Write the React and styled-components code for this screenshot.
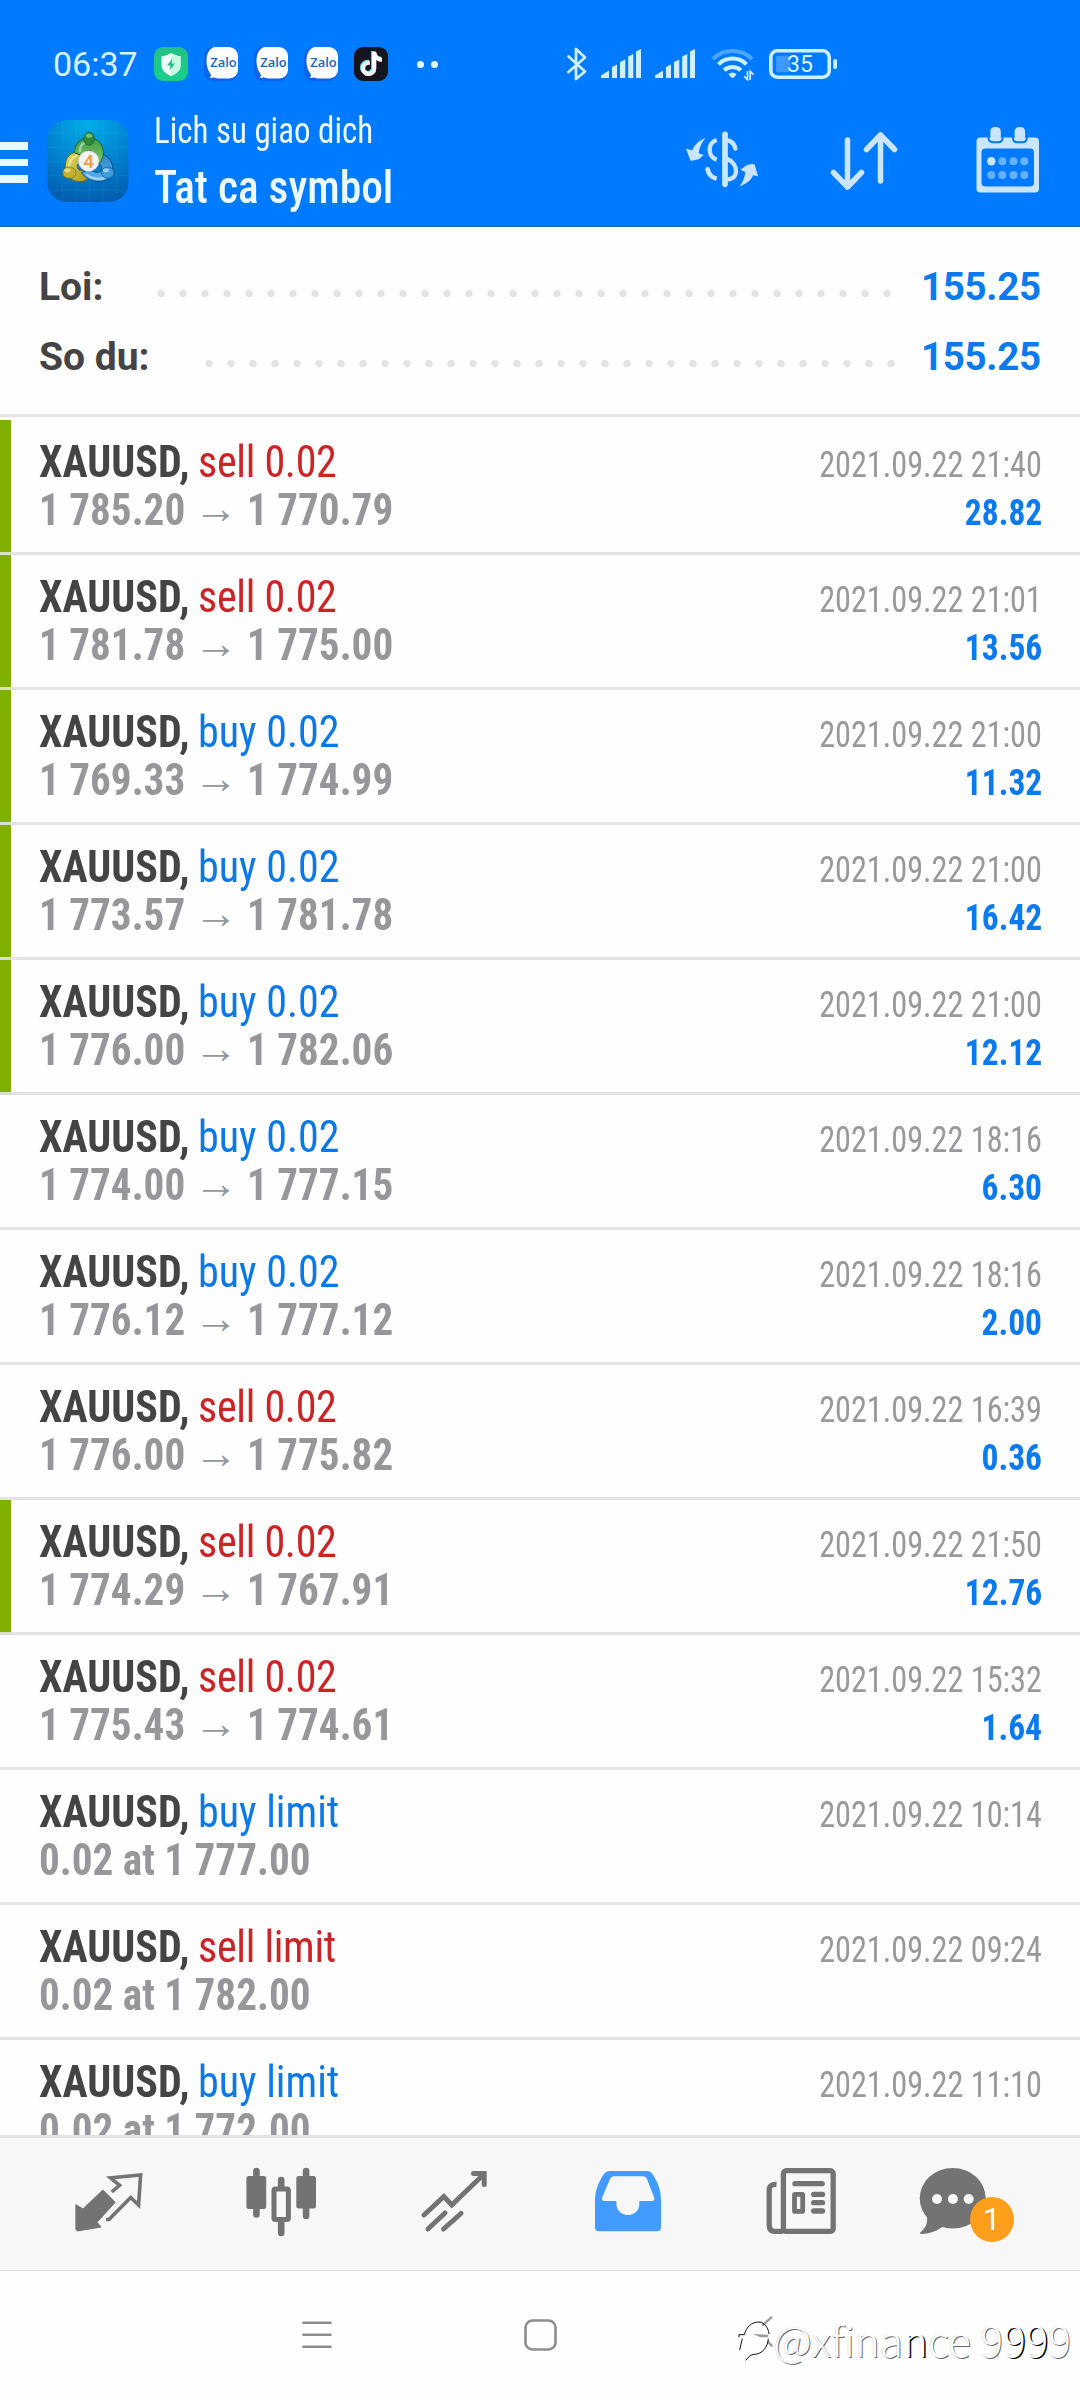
import React from 'react';
import styled, { createGlobalStyle } from 'styled-components';
import { FaTiktok } from 'react-icons/fa6';

const GlobalStyle = createGlobalStyle`
  * {
    box-sizing: border-box;
  }

  body {
    margin: 0;
    background: #fff;
    font-family: Roboto, sans-serif;
  }

  svg {
    display: block;
    flex-shrink: 0;
  }
`;

const Screen = styled.div`
  position: relative;
  display: flex;
  flex-direction: column;
  width: 1080px;
  height: 2400px;
  background: #fefefe;
  overflow: hidden;
`;

const Header = styled.header`
  height: 227px;
  background: #007aff;
  border-bottom: 2px solid #1c6cb8;
`;

const StatusBar = styled.div`
  display: flex;
  align-items: center;
  height: 100px;
  padding: 28px 0 0 53px;
`;

const Clock = styled.span`
  width: 101px;
  font-size: 34px;
  color: #d6f2ff;
`;

const AppIcons = styled.div`
  display: flex;
  align-items: center;
  gap: 16px;
  width: 412px;
`;

const AppTile = styled.span`
  display: flex;
  align-items: center;
  justify-content: center;
  width: 34px;
  height: 34px;
  border-radius: 9px;
  background: ${props => props.$bg};
`;

const MoreDots = styled.span`
  display: flex;
  gap: 7px;
  margin-left: 13px;

  &::before,
  &::after {
    content: '';
    width: 7px;
    height: 7px;
    border-radius: 50%;
    background: #e4f8ff;
  }
`;

const TikTokNote = styled.span`
  display: flex;
  color: #fff;

  svg {
    width: 21px;
    height: 24px;
    filter: drop-shadow(-0.8px -0.5px 0 #3ceae5) drop-shadow(0.8px 0.8px 0 #f5325b);
  }
`;

const SystemIcons = styled.div`
  display: flex;
  align-items: center;
  color: #cdf0ff;
`;

const SystemIcon = styled.span`
  margin-right: ${props => props.$gap}px;
`;

const Toolbar = styled.div`
  display: flex;
  align-items: center;
  height: 125px;
`;

const MenuButton = styled.div`
  display: flex;
  flex-direction: column;
  gap: 9px;
  width: 47px;
`;

const MenuLine = styled.span`
  width: 27.5px;
  height: 7.5px;
  background: #e9f7ff;
`;

const Logo = styled.div`
  margin-bottom: 3px;
`;

const Titles = styled.div`
  align-self: stretch;
  width: 532px;
  padding: 1px 0 0 24.5px;
  color: #edfaff;
`;

const Condensed = styled.span`
  display: inline-block;
  font-family: 'Roboto Condensed', Roboto, sans-serif;
  font-stretch: 75%;
  white-space: nowrap;
  transform: scaleX(${props => props.$scale});
  transform-origin: ${props => props.$origin || 'left'} center;
`;

const Subtitle = styled.div`
  font-size: 37px;
  line-height: 60px;
`;

const Title = styled.div`
  font-size: 47px;
  font-weight: 500;
  line-height: 52px;
`;

const Actions = styled.div`
  display: flex;
  align-items: flex-start;
  padding: 0 0 5px 25px;
`;

const Action = styled.div`
  margin: ${props => props.$top || 0}px ${props => props.$gap || 0}px 0 0;
`;

const Summary = styled.section`
  height: 190px;
  padding: 25px 40px 0 39px;
  border-bottom: 3px solid #e4e4e4;
`;

const SummaryRow = styled.div`
  display: flex;
  height: 70px;
  font-size: 39px;
  line-height: 70px;
  font-weight: 700;
  color: #444;
`;

const Leader = styled.span`
  width: ${props => props.$dots * 22}px;
  height: 70px;
  margin: 0 ${props => props.$gap}px 0 auto;
  background: radial-gradient(circle at 11px 41.5px, #e4e4e4 3.2px, transparent 4.2px) 0 0 / 22px 70px;
`;

const SummaryValue = styled.span`
  width: 119px;
  font-size: 38.5px;
  letter-spacing: -0.3px;
  text-align: right;
  color: #0b7aef;
`;

const List = styled.main`
  height: 1718px;
  padding-top: 3px;
  overflow: hidden;
`;

const Deal = styled.article`
  display: flex;
  justify-content: space-between;
  height: 135px;
  padding: 18px 38px 0 39px;
  border-bottom: 3px solid rgba(226, 226, 226, 0.92);
  background: ${props => (props.$marked ? 'linear-gradient(to right, #7fb000 11px, #fefefe 11px)' : 'none')};
`;

const DealInfo = styled.div`
  font-size: 44px;
  line-height: 48px;
`;

const Symbol = styled.div`
  height: 48px;
  font-weight: 700;
  color: #444;
`;

const Side = styled.span`
  margin-left: 9px;
  font-weight: 400;
  letter-spacing: ${props => (props.$sell ? '-0.3px' : 'normal')};
  color: ${props => (props.$sell ? '#cb2426' : '#0b78e8')};
`;

const Prices = styled.div`
  display: flex;
  height: 48px;
  font-weight: 700;
  color: #96979b;
`;

const Price = styled.span`
  width: ${props => (props.$from ? '155px' : 'auto')};
`;

const Arrow = styled.span`
  width: 53px;
  font-family: 'Liberation Sans', sans-serif;
  font-weight: 400;
  font-size: 44px;
  line-height: 44px;
`;

const DealMeta = styled.div`
  display: flex;
  flex-direction: column;
  align-items: flex-end;
  padding-top: 3px;
  font-size: 36px;
  line-height: 48px;
`;

const DealDate = styled.div`
  height: 48px;
  color: #98999d;
`;

const Profit = styled.div`
  font-weight: 700;
  color: #0b7aef;
`;

const TabBar = styled.nav`
  display: grid;
  grid-template-columns: repeat(6, 1fr);
  height: 136px;
  padding: 27px 18px 0 22px;
  border-top: 3px solid #e3e3e3;
  border-bottom: 1px solid #e0e0e0;
  background: #f7f7f7;
`;

const Tab = styled.div`
  position: relative;
  display: flex;
  align-items: flex-start;
  justify-content: center;
  padding-right: ${props => props.$shift || 0}px;
  color: ${props => (props.$active ? '#429bff' : '#737373')};
`;

const Badge = styled.span`
  position: absolute;
  top: 32px;
  left: 81px;
  width: 44px;
  height: 45px;
  border-radius: 50%;
  background: #ff9e1b;
  color: #fff;
  font-size: 32px;
  line-height: 45px;
  text-align: center;
`;

const SystemNav = styled.footer`
  display: flex;
  align-items: flex-start;
  gap: 192px;
  height: 129px;
  padding: 48px 0 0 302px;
  color: #8d8d8d;
`;

const Watermark = styled.div`
  position: absolute;
  right: 9px;
  bottom: 31px;
  display: flex;
  align-items: center;
  font-family: 'Noto Sans CJK SC', 'Noto Sans', sans-serif;
  font-weight: 300;
  font-size: 42px;
  line-height: 60px;
  letter-spacing: 0.15px;
  white-space: nowrap;
  color: #fff;
  text-shadow: 1px 1px 0 rgba(0, 0, 0, 0.6), -0.5px -0.5px 0.5px rgba(0, 0, 0, 0.2);
`;

const Heavy = styled.span`
  text-shadow: 1.5px 1px 0 #000;
`;

const deals = [
  { sell: true, type: 'sell 0.02', from: '1 785.20', to: '1 770.79', date: '2021.09.22 21:40', profit: '28.82', marked: true },
  { sell: true, type: 'sell 0.02', from: '1 781.78', to: '1 775.00', date: '2021.09.22 21:01', profit: '13.56', marked: true },
  { type: 'buy 0.02', from: '1 769.33', to: '1 774.99', date: '2021.09.22 21:00', profit: '11.32', marked: true },
  { type: 'buy 0.02', from: '1 773.57', to: '1 781.78', date: '2021.09.22 21:00', profit: '16.42', marked: true },
  { type: 'buy 0.02', from: '1 776.00', to: '1 782.06', date: '2021.09.22 21:00', profit: '12.12', marked: true },
  { type: 'buy 0.02', from: '1 774.00', to: '1 777.15', date: '2021.09.22 18:16', profit: '6.30' },
  { type: 'buy 0.02', from: '1 776.12', to: '1 777.12', date: '2021.09.22 18:16', profit: '2.00' },
  { sell: true, type: 'sell 0.02', from: '1 776.00', to: '1 775.82', date: '2021.09.22 16:39', profit: '0.36' },
  { sell: true, type: 'sell 0.02', from: '1 774.29', to: '1 767.91', date: '2021.09.22 21:50', profit: '12.76', marked: true },
  { sell: true, type: 'sell 0.02', from: '1 775.43', to: '1 774.61', date: '2021.09.22 15:32', profit: '1.64' },
  { type: 'buy limit', order: '0.02 at 1 777.00', date: '2021.09.22 10:14' },
  { sell: true, type: 'sell limit', order: '0.02 at 1 782.00', date: '2021.09.22 09:24' },
  { type: 'buy limit', order: '0.02 at 1 772.00', date: '2021.09.22 11:10' },
];

const ShieldIcon = () => (
  <svg width="34" height="34" viewBox="0 0 34 34">
    <path d="M17 6c3 2 6.300 3 9.500 3.200v9.500c0 5-4.500 8-9.500 10.300c-5-2.300-9.500-5.300-9.500-10.300V9.200c3.200-.2 6.500-1.200 9.500-3.200z" fill="#f0fff8" />
    <path d="M17 6c3 2 6.300 3 9.500 3.200v9.500c0 5-4.500 8-9.500 10.300z" fill="#c9fbe4" />
    <path d="M18.500 11.500l-5.500 7h3.500l-1 5 5.500-7h-3.500z" fill="#1fbf84" />
  </svg>
);

const ZaloIcon = () => (
  <svg width="34" height="34" viewBox="0 0 34 34">
    <rect width="34" height="34" rx="9" fill="#0b63ee" />
    <path d="M10 0h15a9 9 0 0 1 9 9v14a8.500 8.500 0 0 1-8.500 8.500H14c-2 0-3-.6-4-1.200-1.500.8-3 .9-4.500.5 1.200-.8 1.700-1.800 1.300-3.300C4 24 2.500 19 2.500 14 2.500 7 5 2 10 0z" fill="#fff" />
    <text x="19.500" y="20" textAnchor="middle" textLength="26.500" lengthAdjust="spacingAndGlyphs" fontFamily="Open Sans" fontWeight="600" fontSize="12.500" fill="#1966b8">Zalo</text>
  </svg>
);

const BluetoothIcon = () => (
  <svg width="22" height="34" viewBox="0 0 22 34" fill="none" stroke="currentColor" strokeWidth="2.800" strokeLinecap="round" strokeLinejoin="round">
    <path d="M2.500 9.500L19 24.500L10 32V2L19 10.500L2.500 25" />
  </svg>
);

const SignalIcon = () => (
  <svg width="40" height="30" viewBox="0 0 40 30" fill="currentColor">
    <path d="M0 26.500L8 21.500V29H0zM11 18L16 15.500V29H11zM19 13L24.300 10.500V29H19zM27.200 7.500L32.300 5V29H27.200zM35 2.500L40 0V29H35z" />
  </svg>
);

const WifiIcon = () => (
  <svg width="43" height="34" viewBox="92 25 128 102" fill="none" stroke="currentColor" strokeWidth="12">
    <path d="M97 61A85 85 0 0 1 215 61" stroke="#4aa5ff" />
    <path d="M114 77A60 60 0 0 1 198 77" />
    <path d="M131 95A37 37 0 0 1 181 95" />
    <path d="M144 106Q156 97 168 106Q166 113 156 119Q146 113 144 106z" fill="currentColor" stroke="none" />
    <path d="M201 97V123L191 113M209 124V98L219 108" strokeWidth="5" />
  </svg>
);

const BatteryIcon = () => (
  <svg width="69" height="30" viewBox="0 0 69 30">
    <rect x="1.800" y="1.800" width="58.400" height="26.400" rx="6.500" fill="none" stroke="currentColor" strokeWidth="3.600" />
    <rect x="7" y="6.700" width="14" height="16.600" rx="2" fill="#3d99ff" />
    <rect x="64.300" y="10" width="3.700" height="10" rx="1.800" fill="currentColor" />
    <text x="31" y="23.200" textAnchor="middle" fontFamily="Roboto" fontSize="23" fill="#d6f4ff">35</text>
  </svg>
);

const TerminalLogo = () => (
  <svg width="82" height="82" viewBox="22 30 244 246">
    <defs>
      <radialGradient id="sky" cx="0.5" cy="0.02" r="1">
        <stop offset="0" stopColor="#00aee8" />
        <stop offset="0.5" stopColor="#0086d2" />
        <stop offset="1" stopColor="#005cad" />
      </radialGradient>
      <linearGradient id="leaf" x2="0" y2="1">
        <stop offset="0" stopColor="#3f9a45" />
        <stop offset="1" stopColor="#7cc96a" />
      </linearGradient>
      <linearGradient id="sand" x2="1" y2="1">
        <stop offset="0" stopColor="#e3dc5c" />
        <stop offset="1" stopColor="#a89a1e" />
      </linearGradient>
      <linearGradient id="sea" x2="0" y2="1">
        <stop offset="0" stopColor="#2c86c8" />
        <stop offset="1" stopColor="#58b4ec" />
      </linearGradient>
    </defs>
    <rect x="22" y="30" width="244" height="246" rx="60" fill="url(#sky)" />
    <path d="M67 32V274M108 30V276M149 30V276M190 30V276M230 34V272M22 69H266M22 112H266M22 154H266M22 197H266M22 241H266" stroke="#7fd0ff" strokeOpacity="0.16" strokeWidth="2" />
    <path d="M110 126C84 130 74 150 76 176C78 200 96 214 120 215C132 215 142 210 146 202L140 180C118 186 110 178 112 164L130 146z" fill="url(#sand)" stroke="#6c6a1c" strokeWidth="3" />
    <path d="M180 130C206 136 220 156 218 182C214 206 194 216 170 214C150 212 134 202 124 188L150 176C160 188 172 190 182 184C188 176 186 166 172 156z" fill="url(#sea)" stroke="#0f4c88" strokeWidth="3" />
    <path d="M147 84C174 84 190 104 190 128C190 142 184 154 178 160L160 142C162 128 156 121 147 121C138 121 132 128 130 138L103 128C103 102 120 84 147 84z" fill="url(#leaf)" stroke="#1c5f38" strokeWidth="3" />
    <path d="M119 124C121 104 132 96 144 96M88 172C88 154 94 144 108 138M140 194C156 208 180 210 196 202" fill="none" stroke="#fff" strokeOpacity="0.45" strokeWidth="7" strokeLinecap="round" />
    <ellipse cx="147" cy="86" rx="16" ry="20" fill="#2f8a3a" stroke="#1c5f38" strokeWidth="2" />
    <ellipse cx="147" cy="77" rx="9" ry="6" fill="#8bd08a" fillOpacity="0.8" />
    <ellipse cx="88" cy="188" rx="20" ry="17" fill="#c2b22e" stroke="#6c6a1c" strokeWidth="2" />
    <ellipse cx="82" cy="181" rx="9" ry="6" fill="#f2eca0" fillOpacity="0.7" />
    <ellipse cx="203" cy="188" rx="19" ry="17" fill="#3f9bdc" stroke="#0f4c88" strokeWidth="2" />
    <ellipse cx="198" cy="181" rx="9" ry="6" fill="#b6e2fb" fillOpacity="0.7" />
    <circle cx="146" cy="153" r="31" fill="#f3f3f3" stroke="#b9b9b9" strokeWidth="2" />
    <text x="146" y="173" textAnchor="middle" fontFamily="Roboto" fontWeight="500" fontSize="57" fill="#f79a3c">4</text>
  </svg>
);

const CurrencyIcon = () => (
  <svg width="72" height="57" viewBox="18 273 216 171" fill="none" stroke="#cce5ff">
    <path d="M135 283V433" strokeWidth="17" strokeLinecap="round" />
    <path d="M143 301Q162 305 166 326" strokeWidth="13" strokeLinecap="round" />
    <path d="M137 355C158 362 168 378 168 394C168 408 158 418 141 418" strokeWidth="13" />
    <path d="M110 300C82 308 82 350 110 359" strokeWidth="13" />
    <path d="M83 388C86 405 95 412 110 416" strokeWidth="14" />
    <circle cx="83" cy="388" r="7" fill="#cce5ff" stroke="none" />
    <path d="M76 294C52 304 42 318 37 331L18 326L31 361Q33 364 56 358L71 345L56 340C58 322 66 306 76 294z" fill="#cce5ff" stroke="none" />
    <path d="M178 440C202 430 214 420 219 406L234 409L224 374Q221 369 200 376L181 389L196 396C194 414 188 428 178 440z" fill="#cce5ff" stroke="none" />
  </svg>
);

const SortIcon = () => (
  <svg width="69" height="61" viewBox="0 0 69 61" fill="none" stroke="#cce5ff" strokeWidth="5.500" strokeLinecap="round" strokeLinejoin="round">
    <path d="M17.500 10V56M3.500 42.500L17.500 57L31.500 42.500M50.500 51V5M36.500 19.500L50.500 5L64.500 19.500" />
  </svg>
);

const CalendarIcon = () => (
  <svg width="64" height="66" viewBox="0 0 64 66">
    <rect x="0.500" y="10.500" width="62.500" height="55" rx="4" fill="#cce5ff" />
    <rect x="5.500" y="21.500" width="52.500" height="38" rx="4" fill="#007aff" />
    <path d="M12.500 9V10.500Q12.500 15.300 17 15.300H22.200Q26.600 15.300 26.600 10.500V9M36.800 9V10.500Q36.800 15.300 41.300 15.300H46.500Q50.900 15.300 50.900 10.500V9" fill="none" stroke="#007aff" strokeWidth="2" />
    <rect x="14.300" y="0" width="10.500" height="13.500" rx="4.500" fill="#cce5ff" />
    <rect x="38.600" y="0" width="10.500" height="13.500" rx="4.500" fill="#cce5ff" />
    <g fill="#66b0ff">
      <circle cx="15.300" cy="34.300" r="4.200" fill="#cce5ff" />
      <circle cx="26.300" cy="34.300" r="4" />
      <circle cx="37.500" cy="34.300" r="4" />
      <circle cx="48.300" cy="34.300" r="4" />
      <circle cx="15.300" cy="48" r="4" />
      <circle cx="26.300" cy="48" r="4" />
      <circle cx="37.500" cy="48" r="4" />
      <circle cx="48.300" cy="48" r="4" />
    </g>
  </svg>
);

const TabSvg = ({ children }) => (
  <svg width="96" height="80" viewBox="0 0 96 80" fill="currentColor">{children}</svg>
);

const QuotesIcon = () => (
  <TabSvg>
    <path d="M14.900 39.700L22 44L41.800 25L54.200 37.300L36 57.300L40 62L16.300 66L14.900 64.300z" stroke="currentColor" strokeLinejoin="round" />
    <path d="M50.700 27L58.600 20.300L49.500 12.800L79.600 9.900L77.600 40L69.700 32.500L48 54.500L45 54.500" fill="none" stroke="currentColor" strokeWidth="3.600" />
  </TabSvg>
);

const ChartsIcon = () => (
  <TabSvg>
    <rect x="12.400" y="11" width="19.800" height="33" rx="2.500" />
    <rect x="62.300" y="11" width="19.700" height="32.500" rx="2.500" />
    <path d="M22.400 6V49.500M72.100 6V51M47.200 15V21M47.200 58V68" stroke="currentColor" strokeWidth="6.600" strokeLinecap="round" />
    <rect x="40" y="24" width="14.400" height="30.500" rx="1.500" fill="none" stroke="currentColor" strokeWidth="5" />
  </TabSvg>
);

const TradeIcon = () => (
  <TabSvg>
    <path d="M17 50L36.900 31.500L44.800 40L77 9M66.500 8.500H77.200V19.500M21 64L38 48M36.500 64L54 48.500" fill="none" stroke="currentColor" strokeWidth="5" strokeLinecap="round" />
  </TabSvg>
);

const HistoryIcon = () => (
  <TabSvg>
    <path fillRule="evenodd" d="M29 6H66Q69.500 6 71.500 9C77 17 80 26 80 35V62Q80 66.300 76 66.300H18Q14 66.300 14 62V35C14 26 17.500 17 23 9Q25 6 29 6zM33 11.300Q30 11.300 29 14L21 33Q20.500 36 23.500 36H35.400V38.500C35.400 45 40 50 47 50C54 50 58.400 45 58.400 38.500V36H71Q74 36 73.300 33L66 14Q65 11.300 62 11.300z" />
  </TabSvg>
);

const NewsIcon = () => (
  <TabSvg>
    <g fill="none" stroke="currentColor" strokeWidth="5.300">
      <rect x="29.400" y="5.700" width="49.800" height="60.700" rx="3" />
      <path d="M22.500 19.500Q15.200 19 15.200 25V60Q15.200 66.400 21 66.400H29" />
      <path d="M41 18.700H68.200M59.700 29.400H68.500M59.700 37.700H68.500M59.700 46H68.500" strokeLinecap="round" />
      <rect x="40.500" y="29.400" width="8.200" height="17" rx="0.500" strokeWidth="4.800" />
    </g>
  </TabSvg>
);

const ChatIcon = () => (
  <TabSvg>
    <ellipse cx="38.700" cy="33.300" rx="33" ry="30.300" />
    <path d="M12 48Q16 60 6 67.500Q6 69 8 69C18 68.500 24 65 30 61z" />
    <g fill="#f7f7f7">
      <circle cx="23" cy="34" r="5" />
      <circle cx="38.900" cy="34" r="5" />
      <circle cx="54.700" cy="34" r="5" />
    </g>
  </TabSvg>
);

const RecentsIcon = () => (
  <svg width="30" height="32" viewBox="0 0 30 32" stroke="currentColor" strokeWidth="2.600" strokeLinecap="round">
    <path d="M1.500 3.700H28.500M1.500 15.700H28.500M1.500 27.700H28.500" />
  </svg>
);

const HomeIcon = () => (
  <svg width="33" height="32" viewBox="0 0 33 32" fill="none" stroke="currentColor" strokeWidth="2.600">
    <rect x="1.500" y="1.500" width="30" height="29" rx="7" />
  </svg>
);

const WatermarkLogo = () => (
  <svg width="36" height="50" viewBox="30 22 108 150" fill="none">
    <path d="M133 32L108 55M124 106L134 117" stroke="#999" strokeWidth="7" strokeLinecap="round" />
    <path d="M78 82L124 84L122 92L100 92z" fill="#999" />
    <path d="M36 92V84H52C58 60 74 46 96 46C112 48 124 62 126 82M46 96L38 130M124 96C122 122 106 142 82 143L70 146L56 161" stroke="#111" strokeWidth="3" />
  </svg>
);

const DealRow = ({ deal }) => (
  <Deal $marked={deal.marked}>
    <DealInfo>
      <Symbol>
        <Condensed $scale={0.955}>XAUUSD,<Side $sell={deal.sell}>{deal.type}</Side></Condensed>
      </Symbol>
      {deal.order ? (
        <Prices>
          <Price><Condensed $scale={0.935}>{deal.order}</Condensed></Price>
        </Prices>
      ) : (
        <Prices>
          <Price $from><Condensed $scale={0.935}>{deal.from}</Condensed></Price>
          <Arrow>→</Arrow>
          <Price><Condensed $scale={0.935}>{deal.to}</Condensed></Price>
        </Prices>
      )}
    </DealInfo>
    <DealMeta>
      <DealDate><Condensed $scale={0.895} $origin="right">{deal.date}</Condensed></DealDate>
      {deal.profit && <Profit><Condensed $scale={0.93} $origin="right">{deal.profit}</Condensed></Profit>}
    </DealMeta>
  </Deal>
);

const App = () => (
  <Screen>
    <GlobalStyle />
    <Header>
      <StatusBar>
        <Clock>06:37</Clock>
        <AppIcons>
          <AppTile $bg="linear-gradient(#24c184, #17cf8c)"><ShieldIcon /></AppTile>
          <ZaloIcon />
          <ZaloIcon />
          <ZaloIcon />
          <AppTile $bg="#14151f"><TikTokNote><FaTiktok /></TikTokNote></AppTile>
          <MoreDots />
        </AppIcons>
        <SystemIcons>
          <SystemIcon $gap={13}><BluetoothIcon /></SystemIcon>
          <SystemIcon $gap={14}><SignalIcon /></SystemIcon>
          <SystemIcon $gap={16}><SignalIcon /></SystemIcon>
          <SystemIcon $gap={15}><WifiIcon /></SystemIcon>
          <BatteryIcon />
        </SystemIcons>
      </StatusBar>
      <Toolbar>
        <MenuButton>
          <MenuLine />
          <MenuLine />
          <MenuLine />
        </MenuButton>
        <Logo><TerminalLogo /></Logo>
        <Titles>
          <Subtitle><Condensed $scale={0.89}>Lich su giao dich</Condensed></Subtitle>
          <Title><Condensed $scale={0.925}>Tat ca symbol</Condensed></Title>
        </Titles>
        <Actions>
          <Action $top={4} $gap={72}><CurrencyIcon /></Action>
          <Action $top={3} $gap={77}><SortIcon /></Action>
          <Action><CalendarIcon /></Action>
        </Actions>
      </Toolbar>
    </Header>

    <Summary>
      <SummaryRow>
        Loi:
        <Leader $dots={34} $gap={23.5} />
        <SummaryValue>155.25</SummaryValue>
      </SummaryRow>
      <SummaryRow>
        So du:
        <Leader $dots={32} $gap={19.5} />
        <SummaryValue>155.25</SummaryValue>
      </SummaryRow>
    </Summary>

    <List>
      {deals.map((deal, index) => (
        <DealRow key={index} deal={deal} />
      ))}
    </List>

    <TabBar>
      <Tab><QuotesIcon /></Tab>
      <Tab><ChartsIcon /></Tab>
      <Tab><TradeIcon /></Tab>
      <Tab $active><HistoryIcon /></Tab>
      <Tab><NewsIcon /></Tab>
      <Tab $shift={26}>
        <ChatIcon />
        <Badge>1</Badge>
      </Tab>
    </TabBar>

    <SystemNav>
      <RecentsIcon />
      <HomeIcon />
    </SystemNav>

    <Watermark>
      <WatermarkLogo />
      <div>@xfina<Heavy>n</Heavy>ce 9<Heavy>99</Heavy>9</div>
    </Watermark>
  </Screen>
);

export default App;
